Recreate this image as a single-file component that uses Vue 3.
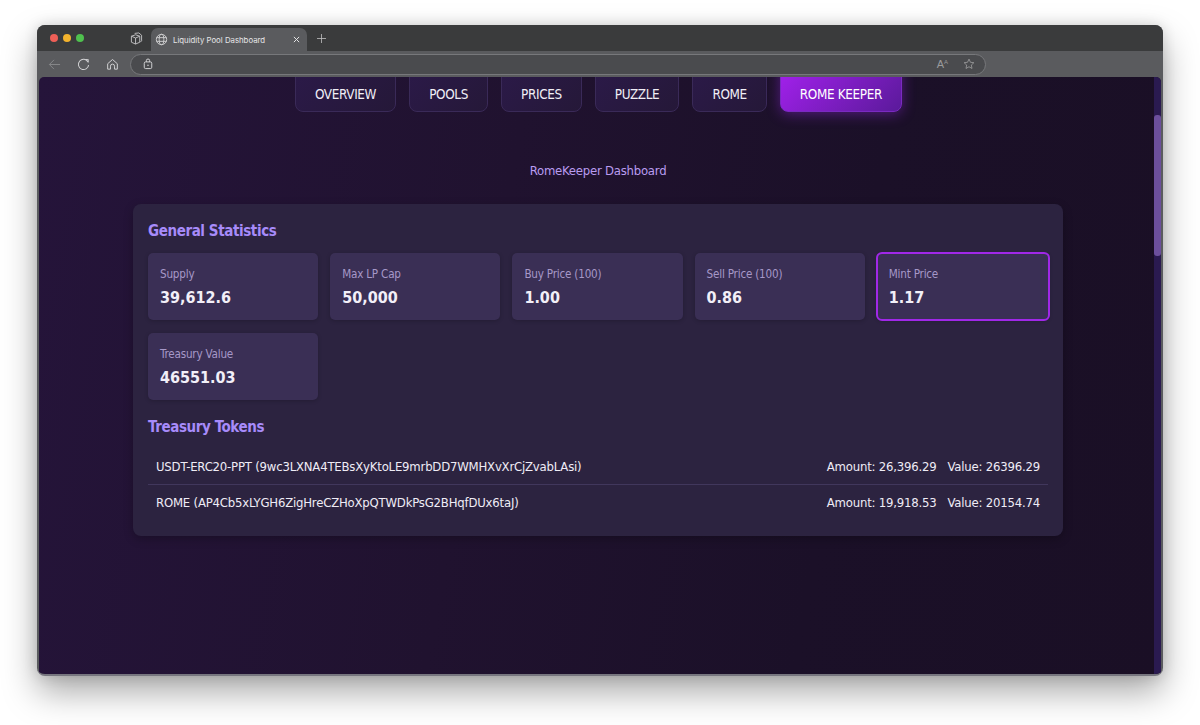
<script setup>
const tabs = ['OVERVIEW', 'POOLS', 'PRICES', 'PUZZLE', 'ROME', 'ROME KEEPER']
const stats = [
  { label: 'Supply', value: '39,612.6' },
  { label: 'Max LP Cap', value: '50,000' },
  { label: 'Buy Price (100)', value: '1.00' },
  { label: 'Sell Price (100)', value: '0.86' },
  { label: 'Mint Price', value: '1.17', hot: true },
  { label: 'Treasury Value', value: '46551.03' }
]
const tokens = [
  { name: 'USDT-ERC20-PPT (9wc3LXNA4TEBsXyKtoLE9mrbDD7WMHXvXrCjZvabLAsi)', amount: '26,396.29', value: '26396.29' },
  { name: 'ROME (AP4Cb5xLYGH6ZigHreCZHoXpQTWDkPsG2BHqfDUx6taJ)', amount: '19,918.53', value: '20154.74' }
]
</script>

<template>
  <div class="stage">
    <div class="window">
      <div class="tabbar">
        <div class="lights">
          <i class="light red"></i><i class="light yellow"></i><i class="light green"></i>
        </div>
        <svg class="ws" viewBox="0 0 14 14" fill="none" stroke="#c4c4c6" stroke-width="1">
          <path d="M5 1.5 9.5 1l3 2.5v6L11 11" />
          <path d="M1.5 4.5 6 3l4.5 1.5v6.5L6 13 1.5 11z" />
          <path d="M1.5 4.5 6 6.5l4.5-2M6 6.5V13" />
        </svg>
        <div class="tab">
          <svg class="globe" viewBox="0 0 14 14" fill="none" stroke="#d0d0d2" stroke-width="1">
            <circle cx="7" cy="7" r="5.6" />
            <ellipse cx="7" cy="7" rx="2.5" ry="5.6" />
            <path d="M1.6 5h10.8M1.6 9h10.8" />
          </svg>
          <span class="tab-title">Liquidity Pool Dashboard</span>
          <svg class="close" viewBox="0 0 8 8" stroke="#e8e8e8" stroke-width="1.1"><path d="M1 1l6 6M7 1l-6 6" /></svg>
        </div>
        <svg class="plus" viewBox="0 0 10 10" stroke="#bdbdbf" stroke-width="0.9"><path d="M5 0v10M0 5h10" /></svg>
      </div>
      <div class="toolbar">
        <svg class="tool back" viewBox="0 0 14 14" fill="none" stroke="#88898b" stroke-width="1"><path d="M13 7H1.5M6.5 2 1.5 7l5 5" /></svg>
        <svg class="tool reload" viewBox="0 0 14 14" fill="none" stroke="#d2d2d4" stroke-width="1.1"><path d="M11.8 4.2A5.5 5.5 0 1 0 12.5 7.5" /><path d="M9 1.6l3 .2.1 3" fill="none" /></svg>
        <svg class="tool home" viewBox="0 0 14 14" fill="none" stroke="#d2d2d4" stroke-width="1.05"><path d="M1.8 12V6.2L7 1.6l5.2 4.6V12H9.2V8.8a2.2 2.2 0 0 0-4.4 0V12z" stroke-linejoin="round" /></svg>
        <div class="address">
          <svg class="lock" viewBox="0 0 12 14" fill="none" stroke="#dcdcde" stroke-width="1.1"><rect x="1.5" y="4.5" width="9" height="8" rx="1.6" /><path d="M4 4.5V3a2 2 0 0 1 4 0v1.5" /><path d="M5 8.5h2" /></svg>
          <span class="spacer"></span>
          <span class="reader">A<sup>A</sup></span>
          <svg class="star" viewBox="0 0 14 14" fill="none" stroke="#9a9a9c" stroke-width="1"><path d="M7 1.3l1.7 3.7 4 .5-3 2.7.8 4L7 10.2l-3.5 2 .8-4-3-2.7 4-.5z" stroke-linejoin="round" /></svg>
        </div>
      </div>
      <div class="viewport">
        <main class="page">
          <nav class="nav">
            <button v-for="(t, i) in tabs" :key="t" class="nav-btn" :class="{ active: i === 5 }">{{ t }}</button>
          </nav>
          <h1 class="heading">RomeKeeper Dashboard</h1>
          <section class="card">
            <h2 class="section-title">General Statistics</h2>
            <div class="grid">
              <div v-for="s in stats" :key="s.label" class="stat" :class="{ hot: s.hot }">
                <div class="stat-label">{{ s.label }}</div>
                <div class="stat-value">{{ s.value }}</div>
              </div>
            </div>
            <h2 class="section-title second">Treasury Tokens</h2>
            <div class="tokens">
              <div v-for="t in tokens" :key="t.name" class="token">
                <span>{{ t.name }}</span>
                <span class="nums"><span>Amount: {{ t.amount }}</span><span>Value: {{ t.value }}</span></span>
              </div>
            </div>
          </section>
        </main>
        <div class="scrollbar"><div class="thumb"></div></div>
      </div>
    </div>
  </div>
</template>

<style>
html, body { margin: 0; background: #fff; }
</style>

<style scoped>
.stage {
  width: 1200px;
  height: 725px;
  box-sizing: border-box;
  padding: 25px 37px 49px;
  background: #fff;
  overflow: hidden;
  font-family: "DejaVu Sans Condensed", "DejaVu Sans", sans-serif;
  font-stretch: condensed;
}
.window {
  height: 651px;
  border-radius: 8px;
  background: #5a5b5e;
  box-shadow: 0 16px 34px rgba(0, 0, 0, .34), 0 0 14px rgba(0, 0, 0, .14);
  display: flex;
  flex-direction: column;
  overflow: hidden;
  border-bottom: 2px solid #77767f;
  box-sizing: border-box;
}
.tabbar {
  height: 26px;
  flex: none;
  background: #3a3b3c;
  display: flex;
  align-items: center;
}
.lights { display: flex; gap: 5px; margin-left: 13px; width: 80px; }
.light { width: 8px; height: 8px; border-radius: 50%; display: block; }
.red { background: #ee5f57; }
.yellow { background: #f3b32d; }
.green { background: #4fc14e; }
.ws { width: 13px; height: 13px; margin-right: 8px; }
.tab {
  width: 156px;
  height: 23px;
  margin-top: 3px;
  background: #5a5b5e;
  border-radius: 7px 7px 0 0;
  display: flex;
  align-items: center;
  box-sizing: border-box;
  padding: 0 7px 0 4px;
}
.globe { width: 13px; height: 13px; margin-right: 5px; }
.tab-title { color: #e6e6e8; font-size: 7.8px; font-stretch: normal; font-family: "Inter", sans-serif; flex: 1; white-space: nowrap; }
.close { width: 7px; height: 7px; }
.plus { width: 9px; height: 9px; margin-left: 10px; }
.toolbar {
  height: 26px;
  flex: none;
  background: #5a5b5e;
  display: flex;
  align-items: center;
}
.tool { width: 13px; height: 13px; }
.back { margin-left: 11px; }
.reload { margin-left: 16px; }
.home { margin-left: 16px; }
.address {
  margin-left: 11px;
  width: 856px;
  height: 21px;
  box-sizing: border-box;
  border: 1px solid #77787b;
  border-radius: 11px;
  background: #4a4b4e;
  display: flex;
  align-items: center;
  padding: 0 10px 0 12px;
}
.lock { width: 10px; height: 12px; }
.spacer { flex: 1; }
.reader { color: #9a9a9c; font-size: 11px; font-stretch: normal; font-family: "Liberation Sans", sans-serif; margin-right: 15px; line-height: 1; }
.reader sup { font-size: 6px; vertical-align: 4px; line-height: 0; }
.star { width: 12px; height: 12px; }
.viewport {
  flex: 1;
  min-height: 0;
  margin: 0 2px;
  border-radius: 5px 5px 0 0;
  display: flex;
  overflow: hidden;
  background: linear-gradient(100deg, #25143a 0%, #20122f 40%, #1b1028 70%, #1a0f25 100%);
}
.page { flex: 1; min-width: 0; padding-left: 3px; }
.nav {
  display: flex;
  justify-content: center;
  gap: 13px;
  margin-top: -20px;
  padding-left: 1px;
}
.nav-btn {
  height: 55px;
  padding: 20px 19px 0;
  box-sizing: border-box;
  border: 1px solid #3a2a58;
  border-radius: 8px;
  background: linear-gradient(135deg, #2c1a4a, #251838);
  color: #f0eef6;
  font: inherit;
  font-size: 13.4px;
  letter-spacing: -.35px;
  white-space: nowrap;
}
.nav-btn.active {
  background: linear-gradient(135deg, #a821f2, #5a1a9a);
  border-color: #7a2bc0;
  color: #fff;
  box-shadow: 0 2px 14px rgba(150, 40, 230, .45);
}
.heading {
  margin: 50px 0 0;
  text-align: center;
  color: #b99cf0;
  font-size: 13px;
  letter-spacing: -.23px;
  font-weight: 400;
  line-height: 18px;
}
.card {
  width: 930px;
  box-sizing: border-box;
  margin: 24px auto 0;
  padding: 17px 15px 16px;
  height: 332px;
  border-radius: 8px;
  background: #2c2340;
  box-shadow: 0 3px 10px rgba(0, 0, 0, .25);
}
.section-title {
  margin: 0;
  color: #a78bfa;
  font-size: 15px;
  letter-spacing: -.4px;
  font-weight: 700;
  line-height: 20px;
}
.second { margin-top: 17px; }
.grid {
  display: grid;
  grid-template-columns: repeat(5, 170.2px);
  gap: 12.5px 12px;
  margin-top: 12px;
}
.stat {
  height: 67px;
  box-sizing: border-box;
  padding: 13px 12px 0;
  border-radius: 5px;
  background: #3a2f55;
  box-shadow: 0 1px 4px rgba(0, 0, 0, .2);
}
.stat.hot {
  outline: 2.5px solid #a028e8;
  outline-offset: -1.5px;
  width: 172px;
}
.stat-label { color: #a698c8; font-size: 11.6px; letter-spacing: -.2px; line-height: 16px; }
.stat-value { color: #f2eff8; font-size: 16px; font-weight: 700; line-height: 20px; margin-top: 6px; }
.tokens { margin-top: 12px; }
.token {
  display: flex;
  justify-content: space-between;
  align-items: center;
  height: 36px;
  padding: 0 8px;
  color: #efecf6;
  font-size: 13px;
  letter-spacing: -.2px;
  box-sizing: border-box;
  border-bottom: 1px solid #41375c;
}
.token:last-child { border-bottom: 0; }
.nums { display: flex; gap: 11px; }
.scrollbar {
  width: 7px;
  flex: none;
  background: #2a1a50;
  padding-top: 38px;
}
.thumb { height: 141px; background: #6c4f9c; border-radius: 3px; }
</style>
